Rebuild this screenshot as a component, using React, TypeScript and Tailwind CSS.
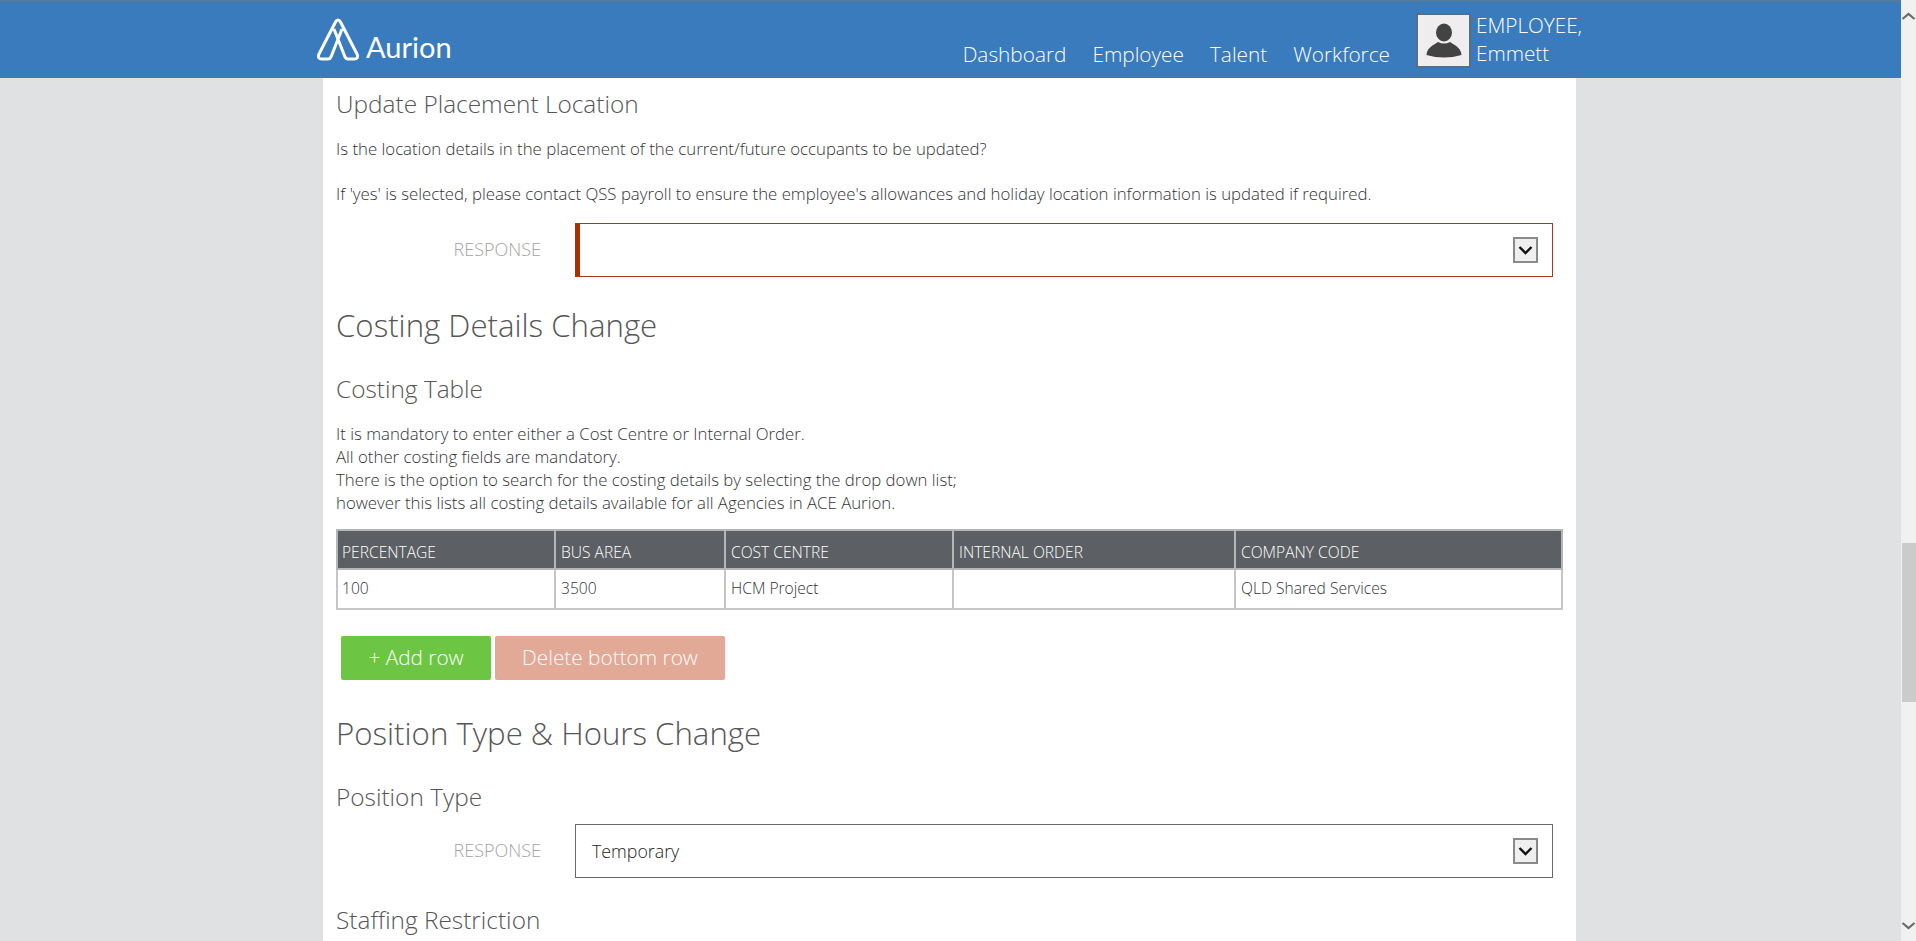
function Chevron({ up }: { up?: boolean }) {
  return (
    <svg width="15" height="10" viewBox="0 0 15 10" fill="none" stroke="#6b6b6b" strokeWidth="2.2">
      <path d={up ? "M1.5 8 L7.5 3 L13.5 8" : "M1.5 2 L7.5 7 L13.5 2"} />
    </svg>
  );
}

function SelectBox({ value, error }: { value?: string; error?: boolean }) {
  return (
    <div className="-ml-[13px] flex items-center">
      <div className="w-[252px] -translate-y-px pr-[34px] text-right text-[18px] font-light text-[#a3a3a3]">RESPONSE</div>
      <div
        className={
          error
            ? "flex h-[54px] w-[978px] items-center justify-between border border-[#a8391c] border-l-[5px] border-l-[#b02d00] pr-[14px] pl-[12px]"
            : "flex h-[54px] w-[978px] items-center justify-between border border-[#666a6e] pr-[14px] pl-[16px]"
        }
      >
        <span className="text-[17.8px] text-[#222]">{value}</span>
        <div className="flex h-[26px] w-[25px] items-center justify-center border-2 border-[#8a8a8a] bg-[#efefef]">
          <svg width="15" height="10" viewBox="0 0 15 10" fill="none" stroke="#111" strokeWidth="2.4">
            <path d="M1.5 2 L7.5 8 L13.5 2" />
          </svg>
        </div>
      </div>
    </div>
  );
}

export default function App() {
  return (
    <div className="flex h-[941px] overflow-hidden bg-[#dfe1e3] font-['Open_Sans',sans-serif]">
      <div className="w-[1901px] shrink-0">
        <header className="h-[78px] border-t-2 border-[#4f7b9f] bg-[#397bbd] text-white">
          <div className="ml-[323px] flex h-full w-[1253px] items-start font-light">
            <div className="mt-[16px] -ml-[6px] flex items-end">
              <svg width="42" height="43" viewBox="0 0 42 43" fill="none" stroke="#fff" strokeWidth="3" strokeLinejoin="round">
                <path d="M21 2 Q19.5 2 18.5 4 L2 36 Q0 41 5 41 L11 41 Q13 41 14 39 L25 11 M21 2 Q22.5 2 23.5 4 L40 36 Q42 41 37 41 L31 41 Q29 41 28 39 L17 11" />
              </svg>
              <span className="ml-[7px] font-['Lato',sans-serif] text-[29px] leading-[29px] font-normal">Aurion</span>
            </div>
            <nav className="mt-[37px] ml-auto flex gap-[26px] text-[20.8px] leading-[30px]">
              <span>Dashboard</span>
              <span>Employee</span>
              <span>Talent</span>
              <span>Workforce</span>
            </nav>
            <div className="mt-[11px] ml-[26px] flex h-[55px] w-[55px] shrink-0 items-center justify-center overflow-hidden border-2 border-[#5d6d7e] bg-[#efeded]">
              <svg width="38" height="38" viewBox="0 0 38 38" fill="#434343">
                <ellipse cx="19" cy="10.5" rx="8" ry="9" />
                <path d="M1.5 33 C2 25 9 23 13 20 Q19 23 25 20 C29 23 36 25 36.5 33 Q19 38 1.5 33 Z" />
              </svg>
            </div>
            <div className="mt-[9px] ml-[5px] w-[100px] shrink-0 text-[20.7px] leading-[28px] whitespace-nowrap">
              EMPLOYEE,
              <br />
              Emmett
            </div>
          </div>
        </header>
        <main className="ml-[323px] h-[863px] w-[1253px] overflow-hidden bg-white pl-[13px] font-light text-[#333]">
          <h2 className="mt-[8px] text-[24.4px] leading-[36px] font-light text-[#565656]">Update Placement Location</h2>
          <p className="mt-[15px] text-[16.8px] leading-[23px]">Is the location details in the placement of the current/future occupants to be updated?</p>
          <p className="mt-[22px] text-[16.8px] leading-[23px]">If 'yes' is selected, please contact QSS payroll to ensure the employee's allowances and holiday location information is updated if required.</p>
          <div className="mt-[18px]">
            <SelectBox error />
          </div>
          <h1 className="mt-[26px] text-[31.2px] leading-[44px] font-light text-[#565656]">Costing Details Change</h1>
          <h2 className="mt-[24px] text-[24.4px] leading-[36px] font-light text-[#565656]">Costing Table</h2>
          <p className="mt-[15px] text-[16.8px] leading-[23px]">
            It is mandatory to enter either a Cost Centre or Internal Order.
            <br />
            All other costing fields are mandatory.
            <br />
            There is the option to search for the costing details by selecting the drop down list;
            <br />
            however this lists all costing details available for all Agencies in ACE Aurion.
          </p>
          <table className="mt-[15px] w-[1227px] table-fixed border-collapse text-[15.6px]">
            <thead>
              <tr className="h-[39px] bg-[#5c6064] text-white">
                <th className="w-[218px] border-2 border-[#b4b6b8] px-[4px] pt-[7px] text-left font-light">PERCENTAGE</th>
                <th className="w-[170px] border-2 border-[#b4b6b8] px-[5px] pt-[7px] text-left font-light">BUS AREA</th>
                <th className="w-[228px] border-2 border-[#b4b6b8] px-[5px] pt-[7px] text-left font-light">COST CENTRE</th>
                <th className="w-[282px] border-2 border-[#b4b6b8] px-[5px] pt-[7px] text-left font-light">INTERNAL ORDER</th>
                <th className="border-2 border-[#b4b6b8] px-[5px] pt-[7px] text-left font-light">COMPANY CODE</th>
              </tr>
            </thead>
            <tbody>
              <tr className="h-[40px]">
                <td className="border-2 border-[#c4c6c8] px-[4px]">100</td>
                <td className="border-2 border-[#c4c6c8] px-[5px]">3500</td>
                <td className="border-2 border-[#c4c6c8] px-[5px]">HCM Project</td>
                <td className="border-2 border-[#c4c6c8] px-[5px]"></td>
                <td className="border-2 border-[#c4c6c8] px-[5px]">QLD Shared Services</td>
              </tr>
            </tbody>
          </table>
          <div className="mt-[26px] ml-[5px] flex gap-[4px] text-[20.8px] font-light text-white">
            <button className="h-[44px] w-[150px] rounded-[2px] bg-[#6cc644]">+ Add row</button>
            <button className="h-[44px] w-[230px] rounded-[2px] bg-[#e2a997]">Delete bottom row</button>
          </div>
          <h1 className="mt-[31px] text-[31.2px] leading-[44px] font-light text-[#565656]">Position Type &amp; Hours Change</h1>
          <h2 className="mt-[24px] text-[24.4px] leading-[36px] font-light text-[#565656]">Position Type</h2>
          <div className="mt-[9px]">
            <SelectBox value="Temporary" />
          </div>
          <h2 className="mt-[24px] text-[24.4px] leading-[36px] font-light text-[#565656]">Staffing Restriction</h2>
        </main>
      </div>
      <div className="flex w-[15px] shrink-0 flex-col items-center bg-[#f1f1f1]">
        <div className="mt-[8px] flex h-[15px] items-center">
          <Chevron up />
        </div>
        <div className="mt-[520px] h-[159px] w-[14px] shrink-0 self-end bg-[#cbcbcb]"></div>
        <div className="mt-auto mb-[8px] flex h-[15px] items-center">
          <Chevron />
        </div>
      </div>
    </div>
  );
}
